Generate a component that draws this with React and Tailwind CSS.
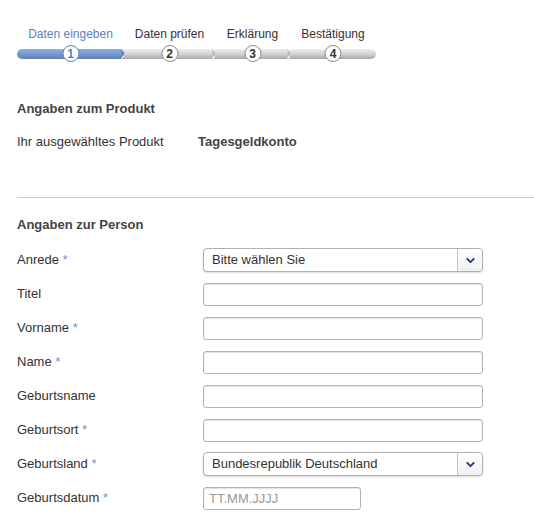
import { ChevronDown } from "lucide-react";

const steps = [
  { label: "Daten eingeben", width: "w-[107px]", active: true },
  { label: "Daten prüfen", width: "w-[91px]" },
  { label: "Erklärung", width: "w-[75px]" },
  { label: "Bestätigung", width: "w-[86px]" },
];

const fields = [
  { label: "Anrede", required: true, type: "select", value: "Bitte wählen Sie" },
  { label: "Titel" },
  { label: "Vorname", required: true },
  { label: "Name", required: true },
  { label: "Geburtsname" },
  { label: "Geburtsort", required: true },
  { label: "Geburtsland", required: true, type: "select", value: "Bundesrepublik Deutschland" },
  { label: "Geburtsdatum", required: true, type: "date" },
];

const Stepper = () => (
  <div className="flex pl-[17px] pt-[26px]">
    {steps.map((step, i) => (
      <div key={step.label} className={`flex ${step.width} flex-col items-center`}>
        <span className={`h-[16px] text-[12px] leading-[16px] ${step.active ? "text-[#5b7fc0]" : "text-[#333]"}`}>
          {step.label}
        </span>
        <div className="relative mt-[3px] flex h-[17px] w-full items-center">
          <div
            className={`h-[10px] w-full ${i === 0 ? "rounded-l-full" : ""} ${i === steps.length - 1 ? "rounded-r-full" : ""} ${
              step.active
                ? "bg-gradient-to-b from-[#93b0dc] to-[#5a80bf]"
                : "bg-gradient-to-b from-[#eeeeee] via-[#d2d2d2] to-[#a9a9a9]"
            }`}
          />
          {i < steps.length - 1 && (
            <svg className="absolute right-[-3px] top-[3px]" width="6" height="11" viewBox="0 0 6 11">
              <path d="M0.5 0 L5 5.5 L0.5 11" fill={step.active ? "#5a80bf" : "#b9b9b9"} stroke="#ffffff" strokeWidth="1.2" />
            </svg>
          )}
          <span
            className={`absolute left-1/2 top-0 flex h-[17px] w-[17px] -translate-x-1/2 items-center justify-center rounded-full border bg-white text-[12px] font-bold leading-none ${
              step.active ? "border-[#5a80bf] text-[#5a80bf]" : "border-[#8a8a8a] text-[#333]"
            }`}
          >
            {i + 1}
          </span>
        </div>
      </div>
    ))}
  </div>
);

const Field = ({ field }) => {
  if (field.type === "select") {
    return (
      <div className="flex h-[24px] w-[280px] items-center rounded-[4px] border border-[#b0b0b0] bg-white shadow-[0_1px_2px_rgba(0,0,0,0.15)]">
        <span className="flex-1 pl-[8px] text-[13px] text-[#333]">{field.value}</span>
        <span className="flex h-full w-[25px] items-center justify-center rounded-r-[4px] border-l border-[#c4c4c4] bg-gradient-to-b from-white to-[#f0f0f0]">
          <ChevronDown size={13} strokeWidth={3.5} className="text-[#1f3d73]" />
        </span>
      </div>
    );
  }
  if (field.type === "date") {
    return (
      <input
        placeholder="TT.MM.JJJJ"
        className="h-[23px] w-[158px] rounded-[3px] border border-[#b3b3b3] bg-white px-[5px] text-[13px] text-[#333] shadow-[inset_0_1px_1px_rgba(0,0,0,0.12)] placeholder:text-[#9a9a9a] focus:outline-none"
      />
    );
  }
  return (
    <input className="h-[23px] w-[280px] rounded-[3px] border border-[#b3b3b3] bg-white px-[5px] text-[13px] text-[#333] shadow-[inset_0_1px_1px_rgba(0,0,0,0.12)] focus:outline-none" />
  );
};

export default function App() {
  return (
    <main className="min-h-[515px] w-[534px] bg-white font-['Liberation_Sans',Arial,sans-serif] text-[13px] text-[#333]">
      <Stepper />

      <section className="pl-[17px] pt-[39px]">
        <h2 className="text-[13px] font-bold leading-[16px] text-[#444]">Angaben zum Produkt</h2>
        <div className="mt-[17px] flex leading-[16px]">
          <span className="w-[181px]">Ihr ausgewähltes Produkt</span>
          <span className="font-bold text-[#444]">Tagesgeldkonto</span>
        </div>
        <hr className="mt-[47px] border-t border-[#cccccc]" />
      </section>

      <section className="pl-[17px] pt-[19px]">
        <h2 className="mb-[10px] text-[13px] font-bold leading-[16px] text-[#444]">Angaben zur Person</h2>
        {fields.map((field) => (
          <div key={field.label} className="flex h-[34px] items-center">
            <label className="w-[186px] leading-[16px]">
              {field.label}
              {field.required && <span className="text-[#6f8fc8]"> *</span>}
            </label>
            <Field field={field} />
          </div>
        ))}
      </section>
    </main>
  );
}
